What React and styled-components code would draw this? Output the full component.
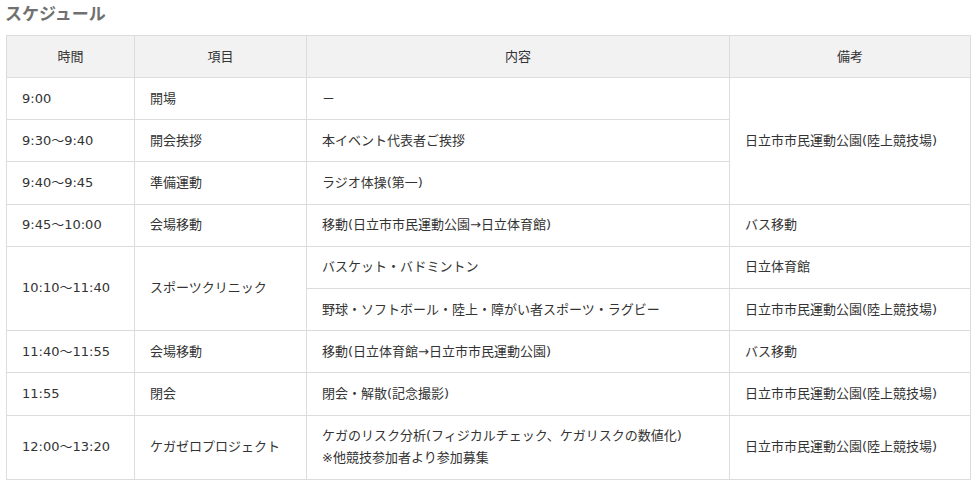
import styled, { createGlobalStyle } from "styled-components";

const GlobalStyle = createGlobalStyle`
  body {
    margin: 0;
    background: #fff;
    font-family: "DejaVu Sans", "Noto Sans CJK JP", sans-serif;
  }
`;

const rows = [
  { time: "9:00", item: "開場", content: ["－"], note: "日立市市民運動公園(陸上競技場)", noteSpan: 3 },
  { time: "9:30～9:40", item: "開会挨拶", content: ["本イベント代表者ご挨拶"] },
  { time: "9:40～9:45", item: "準備運動", content: ["ラジオ体操(第一)"] },
  { time: "9:45～10:00", item: "会場移動", content: ["移動(日立市市民運動公園→日立体育館)"], note: "バス移動" },
  { time: "10:10～11:40", item: "スポーツクリニック", span: 2, content: ["バスケット・バドミントン"], note: "日立体育館" },
  { content: ["野球・ソフトボール・陸上・障がい者スポーツ・ラグビー"], note: "日立市市民運動公園(陸上競技場)" },
  { time: "11:40～11:55", item: "会場移動", content: ["移動(日立体育館→日立市市民運動公園)"], note: "バス移動" },
  { time: "11:55", item: "閉会", content: ["閉会・解散(記念撮影)"], note: "日立市市民運動公園(陸上競技場)" },
  {
    time: "12:00～13:20",
    item: "ケガゼロプロジェクト",
    content: ["ケガのリスク分析(フィジカルチェック、ケガリスクの数値化)", "※他競技参加者より参加募集"],
    note: "日立市市民運動公園(陸上競技場)",
  },
];

export default function App() {
  return (
    <>
      <GlobalStyle />
      <Page>
        <Heading>スケジュール</Heading>
        <Table>
          <colgroup>
            <col style={{ width: 128 }} />
            <col style={{ width: 172 }} />
            <col style={{ width: 423 }} />
            <col />
          </colgroup>
          <thead>
            <tr>
              <Th>時間</Th>
              <Th>項目</Th>
              <Th>内容</Th>
              <Th>備考</Th>
            </tr>
          </thead>
          <tbody>
            {rows.map((r, i) => (
              <tr key={i}>
                {r.time && <Td rowSpan={r.span || 1}>{r.time}</Td>}
                {r.item && <Td rowSpan={r.span || 1}>{r.item}</Td>}
                <Td>
                  {r.content.map((line, j) => (
                    <Line key={j}>{line}</Line>
                  ))}
                </Td>
                {r.note && <Td rowSpan={r.noteSpan || 1}>{r.note}</Td>}
              </tr>
            ))}
          </tbody>
        </Table>
      </Page>
    </>
  );
}

const Page = styled.div`
  padding: 0 5px 0 6px;
  width: 965px;
`;
const Heading = styled.h2`
  margin: 0 0 0 -1px;
  padding-top: 1px;
  height: 34px;
  font-family: "Noto Sans CJK JP", sans-serif;
  font-size: 17px;
  line-height: 24px;
  font-weight: bold;
  color: #707070;
`;
const Table = styled.table`
  width: 965px;
  border-collapse: collapse;
  table-layout: fixed;
  font-size: 13px;
  color: #333;
`;
const Th = styled.th`
  background: #f2f2f2;
  border: 1px solid #dcdcdc;
  font-weight: normal;
  text-align: center;
  padding: 9.5px 15px;
  line-height: 22px;
`;
const Td = styled.td`
  border: 1px solid #dcdcdc;
  text-align: left;
  vertical-align: middle;
  padding: 9.6px 15px;
  line-height: 22px;
`;
const Line = styled.div``;
